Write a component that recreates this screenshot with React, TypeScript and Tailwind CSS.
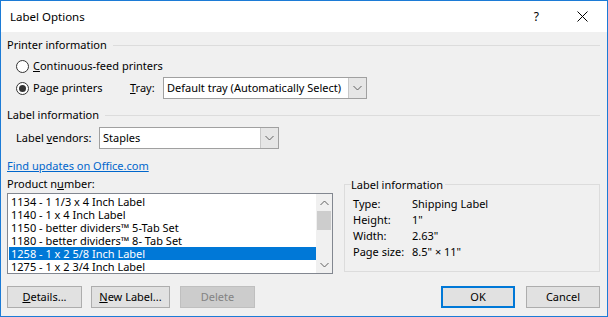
import React from "react";

const font = "font-['Segoe_UI','Noto_Sans',sans-serif]";

const products = [
  "1134 - 1 1/3 x 4 Inch Label",
  "1140 - 1 x 4 Inch Label",
  "1150 - better dividers™ 5-Tab Set",
  "1180 - better dividers™ 8- Tab Set",
  "1258 - 1 x 2 5/8 Inch Label",
  "1275 - 1 x 2 3/4 Inch Label",
];

const info = [
  ["Type:", "Shipping Label"],
  ["Height:", "1\""],
  ["Width:", "2.63\""],
  ["Page size:", "8.5\" × 11\""],
];

function Chevron({ up = false }: { up?: boolean }) {
  return (
    <svg width="9" height="6" viewBox="0 0 9 6" className="block">
      <path
        d={up ? "M0.5 5 L4.5 1 L8.5 5" : "M0.5 1 L4.5 5 L8.5 1"}
        fill="none"
        stroke="#606060"
        strokeWidth="1"
      />
    </svg>
  );
}

function Heading({ text }: { text: string }) {
  return (
    <div className="flex h-[16px] items-center">
      <span>{text}</span>
      <div className="ml-[6px] mr-[7px] h-px flex-1 bg-[#dcdcdc]" />
    </div>
  );
}

function Radio({ checked, children }: { checked?: boolean; children: React.ReactNode }) {
  return (
    <div className="flex items-center">
      <span className="flex h-[13px] w-[13px] items-center justify-center rounded-full border border-[#333] bg-white">
        {checked && <span className="h-[7px] w-[7px] rounded-full bg-[#333]" />}
      </span>
      <span className="ml-[4px]">{children}</span>
    </div>
  );
}

function Combo({ value, width }: { value: string; width: string }) {
  return (
    <div className={`flex h-[22px] border border-[#a0a0a0] bg-white ${width}`}>
      <span className="flex flex-1 items-center whitespace-nowrap pl-[3px]">{value}</span>
      <span className="flex w-[18px] items-center justify-center border-l border-[#c8c8c8] bg-[#e6e6e6]">
        <Chevron />
      </span>
    </div>
  );
}

function Button({
  children,
  width,
  disabled,
  primary,
}: {
  children: React.ReactNode;
  width: string;
  disabled?: boolean;
  primary?: boolean;
}) {
  return (
    <div
      className={`flex h-[22px] items-center justify-center ${width} ${
        disabled
          ? "border border-[#bfbfbf] bg-[#cccccc] text-[#838383]"
          : primary
          ? "border-2 border-[#0078d7] bg-[#e1e1e1]"
          : "border border-[#adadad] bg-[#e1e1e1]"
      }`}
    >
      {children}
    </div>
  );
}

export default function App() {
  return (
    <div
      className={`flex h-[317px] w-[608px] flex-col border border-[#1c7bd6] bg-[#f0f0f0] text-[11px] leading-[16px] text-black ${font}`}
    >
      {/* title bar */}
      <div className="flex h-[31px] shrink-0 items-center bg-white">
        <span className="pl-[9px] text-[11.5px]">Label Options</span>
        <span className="ml-auto mr-[38px] text-[12px]">?</span>
        <svg width="11" height="11" viewBox="0 0 11 11" className="mr-[19px]">
          <path d="M0.5 0.5 L10.5 10.5 M10.5 0.5 L0.5 10.5" stroke="#000" strokeWidth="1" />
        </svg>
      </div>

      <div className="flex flex-1 flex-col pl-[6px]">
        <div className="mt-[5px]">
          <Heading text="Printer information" />
        </div>
        <div className="ml-[9px] mt-[5px] h-[16px]">
          <Radio>
            <u>C</u>ontinuous-feed printers
          </Radio>
        </div>
        <div className="ml-[9px] mt-[3px] flex h-[22px] items-center">
          <div className="w-[114px]">
            <Radio checked>
              Pa<u>g</u>e printers
            </Radio>
          </div>
          <span className="w-[33px]">
            <u>T</u>ray:
          </span>
          <Combo value="Default tray (Automatically Select)" width="w-[204px]" />
        </div>

        <div className="mt-[8px]">
          <Heading text="Label information" />
        </div>
        <div className="ml-[9px] mt-[4px] flex h-[22px] items-center">
          <span className="w-[83px]">
            Label <u>v</u>endors:
          </span>
          <Combo value="Staples" width="w-[180px]" />
        </div>

        <div className="mt-[9px] h-[16px]">
          <span className="text-[#0066cc] underline">Find updates on Office.com</span>
        </div>

        <div className="mt-[2px] flex">
          <div className="w-[326px]">
            <div className="h-[16px]">
              Product n<u>u</u>mber:
            </div>
            <div className="mt-px flex h-[81px] border border-[#828790] bg-white">
              <div className="flex-1 pl-px pt-px">
                {products.map((p, i) => (
                  <div
                    key={p}
                    className={`h-[13px] pl-[2px] leading-[13px] ${
                      i === 4 ? "bg-[#0078d7] text-white" : ""
                    }`}
                  >
                    {p}
                  </div>
                ))}
              </div>
              <div className="flex w-[16px] flex-col items-center bg-[#f0f0f0]">
                <div className="flex h-[17px] items-center">
                  <Chevron up />
                </div>
                <div className="h-[19px] w-[14px] bg-[#cdcdcd]" />
                <div className="mt-auto flex h-[17px] items-center">
                  <Chevron />
                </div>
              </div>
            </div>
          </div>

          <div className="ml-[11px] w-[256px] pt-[8px]">
            <div className="h-[88px] border border-[#dcdcdc] pl-[8px] pt-[11px]">
              <div className="-ml-[2px] -mt-[19px] mb-[3px] w-fit bg-[#f0f0f0] pr-[2px]">
                Label information
              </div>
              {info.map(([k, v]) => (
                <div key={k} className="flex h-[16px]">
                  <span className="w-[59px]">{k}</span>
                  <span>{v}</span>
                </div>
              ))}
            </div>
          </div>
        </div>

        <div className="mt-[12px] flex pr-[7px]">
          <Button width="w-[75px]">
            <span>
              <u>D</u>etails...
            </span>
          </Button>
          <div className="ml-[9px]">
            <Button width="w-[79px]">
              <span>
                <u>N</u>ew Label...
              </span>
            </Button>
          </div>
          <div className="ml-[10px]">
            <Button width="w-[75px]" disabled>
              Delete
            </Button>
          </div>
          <div className="ml-auto">
            <Button width="w-[74px]" primary>
              OK
            </Button>
          </div>
          <div className="ml-[11px]">
            <Button width="w-[74px]">Cancel</Button>
          </div>
        </div>
      </div>
    </div>
  );
}
